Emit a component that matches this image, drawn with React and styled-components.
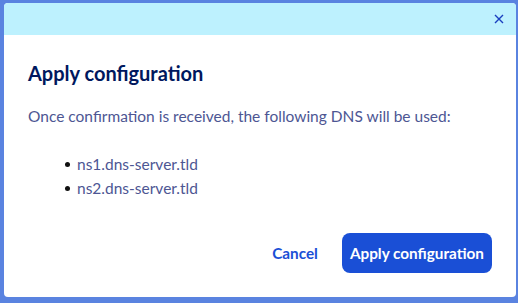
import React from "react";
import styled, { createGlobalStyle } from "styled-components";

const Global = createGlobalStyle`
  html, body {
    margin: 0;
    padding: 0;
    background: #5a83e0;
  }
  body {
    font-family: "Lato", "Open Sans", sans-serif;
  }
`;

const Backdrop = styled.div`
  width: 518px;
  height: 303px;
  padding: 3px 2px 6px 4px;
  box-sizing: border-box;
`;

const Modal = styled.div`
  background: #fff;
  border-radius: 4px;
  height: 100%;
  overflow: hidden;
  display: flex;
  flex-direction: column;
`;

const Header = styled.div`
  height: 32px;
  background: #bdf1fe;
  display: flex;
  justify-content: flex-end;
  align-items: center;
  padding-right: 11px;
`;

const CloseButton = styled.button`
  border: 0;
  background: none;
  padding: 0;
  width: 12px;
  height: 12px;
  display: flex;
  align-items: center;
  justify-content: center;
  cursor: pointer;
`;

const Body = styled.div`
  padding: 25px 24px 0 24px;
  flex: 1;
`;

const Title = styled.h2`
  margin: 0;
  font-size: 20px;
  font-weight: 700;
  color: #00185e;
  line-height: 26px;
`;

const Text = styled.p`
  margin: 18px 0 0;
  font-size: 15.5px;
  color: #4d5693;
  line-height: 24px;
`;

const List = styled.ul`
  margin: 24px 0 0;
  padding-left: 49px;
  list-style: none;
`;

const Item = styled.li`
  font-size: 15.5px;
  color: #4d5693;
  line-height: 24px;
  position: relative;
  &::before {
    content: "";
    position: absolute;
    left: -12px;
    top: 10px;
    width: 5px;
    height: 5px;
    border-radius: 50%;
    background: #111;
  }
`;

const Footer = styled.div`
  display: flex;
  justify-content: flex-end;
  align-items: center;
  gap: 24px;
  padding: 0 24px 24px 0;
`;

const Button = styled.button`
  font-family: "Lato", "Open Sans", sans-serif;
  font-size: 15.3px;
  font-weight: 700;
  border: 0;
  cursor: pointer;
  border-radius: 8px;
  height: 40px;
  padding: ${(p) => (p.$primary ? "0 8px" : "0")};
  background: ${(p) => (p.$primary ? "#1a4fd6" : "transparent")};
  color: ${(p) => (p.$primary ? "#fff" : "#1a4fd6")};
`;

export default function App() {
  return (
    <>
      <Global />
      <Backdrop>
        <Modal>
          <Header>
            <CloseButton aria-label="Close">
              <svg width="10" height="10" viewBox="0 0 10 10">
                <path d="M1 1 L9 9 M9 1 L1 9" stroke="#1a3fc0" strokeWidth="1.4" />
              </svg>
            </CloseButton>
          </Header>
          <Body>
            <Title>Apply configuration</Title>
            <Text>Once confirmation is received, the following DNS will be used:</Text>
            <List>
              <Item>ns1.dns-server.tld</Item>
              <Item>ns2.dns-server.tld</Item>
            </List>
          </Body>
          <Footer>
            <Button>Cancel</Button>
            <Button $primary>Apply configuration</Button>
          </Footer>
        </Modal>
      </Backdrop>
    </>
  );
}
